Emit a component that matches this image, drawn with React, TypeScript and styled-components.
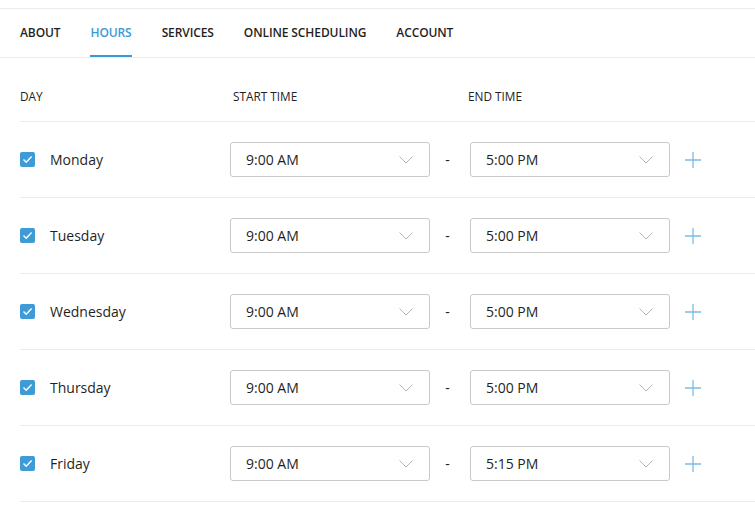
import React from "react";
import styled, { createGlobalStyle } from "styled-components";

const GlobalStyle = createGlobalStyle`
  body {
    margin: 0;
    background: #ffffff;
    font-family: "Open Sans", "Noto Sans", sans-serif;
    color: #222222;
  }
`;

const Page = styled.div`
  padding-top: 8px;
`;

const Nav = styled.div`
  display: flex;
  flex-direction: row;
  gap: 30px;
  padding: 0 20px;
  height: 48px;
  border-top: 1px solid #ebebeb;
  border-bottom: 1px solid #ebebeb;
`;

const Tab = styled.div<{ $active?: boolean }>`
  display: flex;
  align-items: center;
  box-sizing: border-box;
  height: 48px;
  padding-top: 1px;
  font-size: 12px;
  font-weight: 600;
  letter-spacing: -0.1px;
  color: ${(p) => (p.$active ? "#3b99d5" : "#1f1f1f")};
  border-bottom: 2px solid ${(p) => (p.$active ? "#3b99d5" : "transparent")};
`;

const Table = styled.div`
  padding-left: 20px;
`;

const HeaderRow = styled.div`
  display: grid;
  grid-template-columns: 213px 235px auto;
  align-items: end;
  height: 63px;
  box-sizing: border-box;
  padding-bottom: 17px;
`;

const HeaderCell = styled.div`
  font-size: 11.8px;
  line-height: 15px;
  color: #222222;
`;

const Rows = styled.div`
  border-bottom: 1px solid #ebebeb;
`;

const Row = styled.div`
  display: grid;
  grid-template-columns: 210px 200px 40px 200px auto;
  align-items: center;
  height: 76px;
  box-sizing: border-box;
  border-top: 1px solid #ebebeb;
`;

const DayCell = styled.div`
  display: flex;
  align-items: center;
  gap: 15px;
`;

const Check = styled.div`
  width: 15px;
  height: 15px;
  border-radius: 2px;
  background: #3f9bd7;
  display: flex;
  align-items: center;
  justify-content: center;
`;

const DayName = styled.div`
  font-size: 14px;
  color: #1f1f1f;
`;

const Select = styled.div`
  display: flex;
  align-items: center;
  justify-content: space-between;
  box-sizing: border-box;
  height: 35px;
  padding: 0 16px 0 15px;
  border: 1px solid #c9c9c9;
  border-radius: 3px;
  font-size: 14px;
  color: #1f1f1f;
`;

const Dash = styled.div`
  text-align: center;
  padding-right: 5px;
  font-size: 14px;
  color: #1f1f1f;
`;

const AddButton = styled.div`
  display: flex;
  align-items: center;
  margin-left: 15px;
`;

const CheckMark = () => (
  <svg width="11" height="9" viewBox="0 0 11 9">
    <path d="M1.5 4.5 L4.2 7.2 L9.6 1.6" fill="none" stroke="#ffffff" strokeWidth="1.4" />
  </svg>
);

const Chevron = () => (
  <svg width="14" height="8" viewBox="0 0 14 8">
    <path d="M0.5 0.5 L7 7 L13.5 0.5" fill="none" stroke="#b5b5b5" strokeWidth="1" />
  </svg>
);

const Plus = () => (
  <svg width="16" height="16" viewBox="0 0 16 16">
    <path d="M8 0 V16 M0 8 H16" fill="none" stroke="#7cbbe7" strokeWidth="1.3" />
  </svg>
);

const tabs = ["ABOUT", "HOURS", "SERVICES", "ONLINE SCHEDULING", "ACCOUNT"];

const days = [
  { name: "Monday", start: "9:00 AM", end: "5:00 PM" },
  { name: "Tuesday", start: "9:00 AM", end: "5:00 PM" },
  { name: "Wednesday", start: "9:00 AM", end: "5:00 PM" },
  { name: "Thursday", start: "9:00 AM", end: "5:00 PM" },
  { name: "Friday", start: "9:00 AM", end: "5:15 PM" },
];

const App: React.FC = () => {
  return (
    <Page>
      <GlobalStyle />
      <Nav>
        {tabs.map((tab) => (
          <Tab key={tab} $active={tab === "HOURS"}>
            {tab}
          </Tab>
        ))}
      </Nav>
      <Table>
        <HeaderRow>
          <HeaderCell>DAY</HeaderCell>
          <HeaderCell>START TIME</HeaderCell>
          <HeaderCell>END TIME</HeaderCell>
        </HeaderRow>
        <Rows>
          {days.map((day) => (
            <Row key={day.name}>
              <DayCell>
                <Check>
                  <CheckMark />
                </Check>
                <DayName>{day.name}</DayName>
              </DayCell>
              <Select>
                {day.start}
                <Chevron />
              </Select>
              <Dash>-</Dash>
              <Select>
                {day.end}
                <Chevron />
              </Select>
              <AddButton>
                <Plus />
              </AddButton>
            </Row>
          ))}
        </Rows>
      </Table>
    </Page>
  );
};

export default App;
